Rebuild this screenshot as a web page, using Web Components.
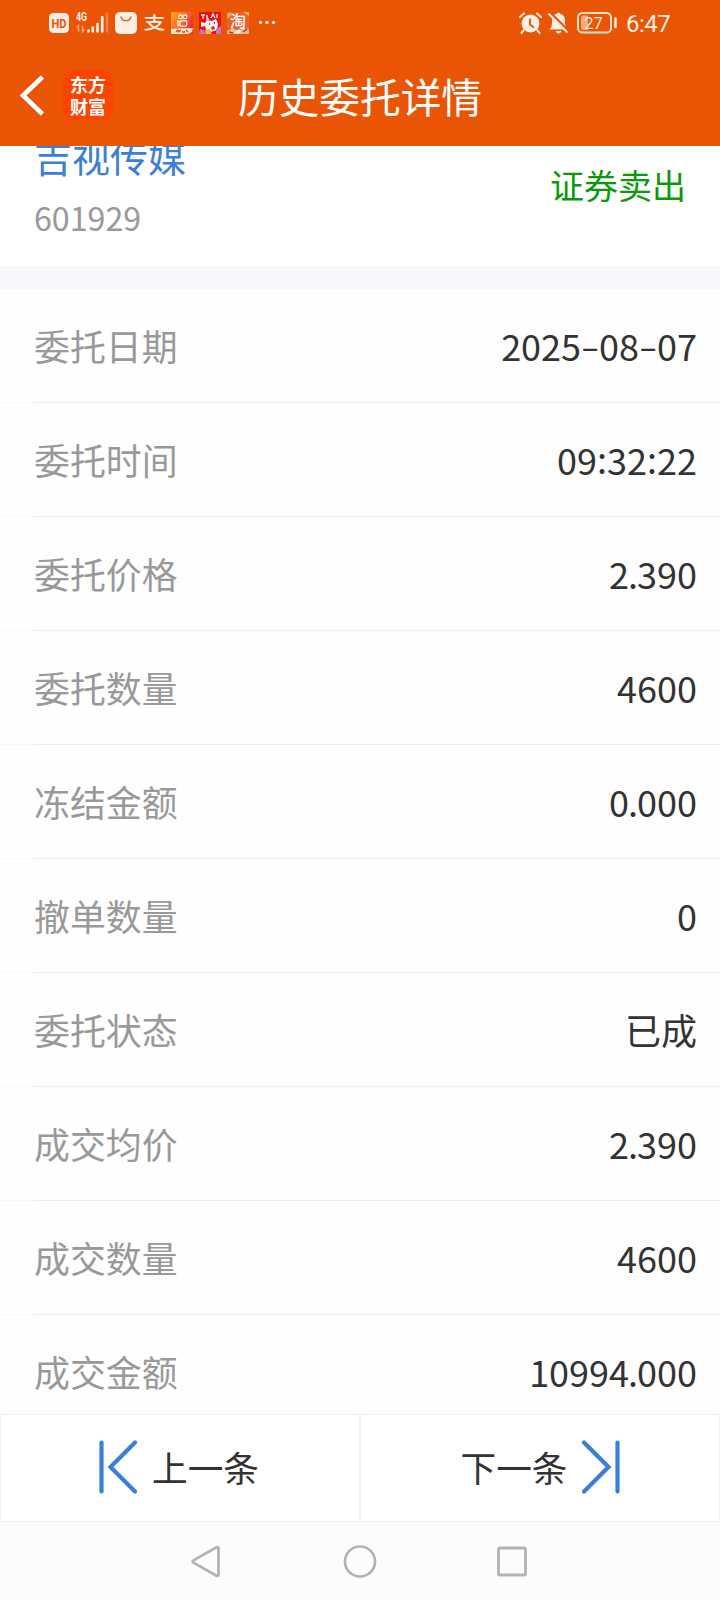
<!DOCTYPE html>
<html lang="zh-CN">
<head>
<meta charset="utf-8">
<title>历史委托详情</title>
<style>
html,body{margin:0;height:100%;background:#fff}
body{font-family:"Noto Sans CJK SC",sans-serif;color:#333;overflow:hidden}
</style>
</head>
<body>
<order-page></order-page>
<script>
function define(name, html) {
  const t = document.createElement('template');
  t.innerHTML = html;
  customElements.define(name, class extends HTMLElement {
    constructor() {
      super();
      this.attachShadow({mode: 'open'}).appendChild(t.content.cloneNode(true));
    }
  });
}

define('status-bar', `
<style>
:host{display:flex;height:46px;box-sizing:border-box;padding:12px 50px 0 49px;align-items:flex-start;color:#ffeee2}
svg{display:block;flex:none;overflow:visible}
.l,.r{display:flex;align-items:flex-start}
.r{margin-left:auto}
text{font-family:"Noto Sans CJK SC",sans-serif}
.time{font:24px/24px Roboto,sans-serif;letter-spacing:-.5px;width:44px;white-space:nowrap;margin-left:8px}
</style>
<div class="l">
 <svg width="20" height="22"><rect y="1" width="20" height="20" rx="4.5" fill="#ffeee2"/><text x="10" y="16" text-anchor="middle" textLength="15" lengthAdjust="spacingAndGlyphs" font-size="13.500" font-weight="700" style="font-family:Roboto,sans-serif" fill="#e95504">HD</text></svg>
 <svg width="33" height="22" style="margin-left:6px"><text x="1" y="8.5" textLength="11" lengthAdjust="spacingAndGlyphs" font-size="12" font-weight="700" style="font-family:Roboto,sans-serif" fill="#ffeee2">4G</text>
 <path d="M3.5 19.5v-6l-2 2M7.500 13.500v6l2-2" stroke="#f5a577" stroke-width="1.600" fill="none"/>
 <path d="M13.500 19.500v-1M17.800 19.500v-4M22.500 19.500v-7.500M27.200 19.500V5" stroke="#ffeee2" stroke-width="2.700" stroke-linecap="round"/><path d="M32 19.500V1.500" stroke="#f08448" stroke-width="2.500" stroke-linecap="round"/></svg>
 <svg width="22" height="22" style="margin-left:7px"><rect width="22" height="22" rx="5" fill="#ffeee2"/><path d="M6 5c1.500 5 8.500 5 10 0" fill="none" stroke="#d96a2c" stroke-width="1.500" stroke-linecap="round"/></svg>
 <svg width="21" height="22" style="margin-left:7px"><text x="-.5" y="17" textLength="22" lengthAdjust="spacingAndGlyphs" font-size="17.500" font-weight="500" fill="#ffeee2">支</text></svg>
 <svg width="22" height="22" style="margin-left:6px"><defs><linearGradient id="k" x1="0" y1="0" x2="1" y2=".6"><stop stop-color="#ffa51d"/><stop offset=".55" stop-color="#f96a29"/><stop offset="1" stop-color="#f5243c"/></linearGradient></defs><rect width="22" height="22" fill="url(#k)"/><g fill="none" stroke="#fff3dc" stroke-width="1.300"><rect x="7.700" y="3" width="3.500" height="3.600" rx="1.200"/><rect x="12.200" y="3" width="3.500" height="3.600" rx="1.200"/><rect x="9" y="8.800" width="6.700" height="5.400" rx="1"/><path d="M9 10l-2-1v5l2-1"/></g><path d="M0 17q11-1 22-1l-1 4-4 2H0z" fill="#ffe9c0"/><path d="M5 20l2-2 1 2 2-2m1 2h3m1-2l2 2" stroke="#d83b29" stroke-width="1.300" fill="none"/></svg>
 <svg width="22" height="22" style="margin-left:6px"><rect width="22" height="22" fill="#ef0d13"/><path d="M2 3h4M4 3v4M8 3v4h2M12 6l2-4 2 4M18 2v4" stroke="#fff" stroke-width="1.300" fill="none"/><path d="M2 10l4 1 2-3 5 1 4-2 2 5-1 6-6 2-5-2-1-4-4 1z" fill="#fff4f3"/><path d="M1 17l4 1 2 4H0zM17 17l5-3v8h-5z" fill="#bd75ca"/><path d="M6 18l4-1 3 5H7z" fill="#ffb43d"/><path d="M10 12h1M15 11h1" stroke="#321515" stroke-width="1.500"/><path d="M12 15l3-1 1 3-3 1z" fill="#e51e22"/></svg>
 <svg width="22" height="22" style="margin-left:6px"><rect width="22" height="22" fill="#ed6128"/><path d="M0 2l3-2 2 3-5 4zM16 0h6v4z" fill="#e8ad52"/><path d="M0 19l6-3 5 3 6-3 5 1v5H0z" fill="#e9bb91"/><path d="M9 19l3-2 2 2-2 3-5-1z" fill="#fff4ea"/><path d="M2 20l4 1M16 20l4-3" stroke="#bf3328" stroke-width="1.500"/><text x="3" y="15" font-size="16" font-weight="500" fill="#fff">淘</text></svg>
 <svg width="20" height="22" style="margin-left:9px"><g fill="#ffeee2"><circle cx="2.500" cy="10.500" r="1.700"/><circle cx="9" cy="10.500" r="1.700"/><circle cx="15.500" cy="10.500" r="1.700"/></g></svg>
</div>
<div class="r">
 <svg width="23" height="22"><circle cx="11.500" cy="11.500" r="9" fill="#ffeee2"/><path d="M1 5l4-3.500M22 5l-4-3.500M4.500 18.500L2.500 21M18.500 18.500l2 2.500" stroke="#ffeee2" stroke-width="2.200" stroke-linecap="round"/><path d="M11 6.500v6l4 3" fill="none" stroke="#e95504" stroke-width="1.900"/></svg>
 <svg width="21" height="22" style="margin-left:6px"><path d="M1.500 17.500C4 15 4 13 4 8c0-4 3-6 5-6.300C9 .3 12 .3 12 1.700c3 .6 5 3 5 6.300 0 5 0 7 2.500 9.500z" fill="#ffeee2"/><path d="M7.500 19h6q-1 2.500-3 2.500T7.500 19z" fill="#ffeee2"/><path d="M2 .500L21 19.500" stroke="#e95504" stroke-width="2.500"/><path d="M.500 1.500L19.500 20.500" stroke="#ffeee2" stroke-width="2"/></svg>
 <svg width="41" height="22" style="margin-left:8px"><rect x="1" y="1" width="33" height="19.500" rx="4.500" fill="none" stroke="#ffddc7" stroke-width="2"/><path d="M6 3.500h5v14.500H6q-2 0-2-2.500V6Q4 3.500 6 3.500z" fill="#f9a877"/><path d="M38.500 6.500v8.500" stroke="#ffeee2" stroke-width="2.500" stroke-linecap="round"/><text x="16.500" y="16.500" text-anchor="middle" font-size="16.500" style="font-family:Roboto,sans-serif" fill="#fff0e4">27</text></svg>
 <div class="time">6:47</div>
</div>`);

define('title-bar', `
<style>
:host{display:grid;grid-template-columns:1fr auto 1fr;height:100px;color:#fff;align-items:start}
.left{display:flex;align-items:flex-start;padding:24px 0 0 19px}
svg{display:block;margin-top:4px}
.logo{width:50px;height:51px;margin-left:18px;border-radius:11px;background:#ff4400;box-sizing:border-box;padding-top:3px;text-align:center;font-weight:700;font-size:18px;line-height:22px}
h1{margin:0;padding-top:20px;font-size:40.700px;line-height:60px;font-weight:400;white-space:nowrap}
</style>
<div class="left"><svg width="26" height="43"><path d="M23.500 3L4 21.500 23.500 40" fill="none" stroke="#fff" stroke-width="4.600"/></svg><div class="logo">东方<br>财富</div></div>
<h1><slot></slot></h1><span></span>`);

define('stock-head', `
<style>
:host{display:flex;justify-content:space-between;height:120px;box-sizing:border-box;padding:0 34px;background:#fff;overflow:hidden}
.name{display:block;color:#3a80d9;font-size:38px;line-height:56px;margin-top:-18px;white-space:nowrap}
.code{display:block;color:#999;font-size:32.200px;line-height:48px;margin-top:9px}
.side{display:block;color:#0a9a0a;font-size:34px;line-height:50px;padding-top:14px}
</style>
<div><slot class="name" name="name"></slot><slot class="code" name="code"></slot></div>
<slot class="side" name="side"></slot>`);

define('detail-row', `
<style>
:host{display:flex;justify-content:space-between;height:114px;box-sizing:border-box;padding:29px 23px 0 34px;background:linear-gradient(#ebecee,#ebecee) 34px 113px/100% 1px no-repeat,linear-gradient(#f8f8f8,#f8f8f8) 0 113px/34px 1px no-repeat,#fefefe;line-height:54px;font-size:35.900px;flex:none}
.k{color:#999}
.v{color:#333;font-size:36px}
::slotted(i){display:inline-block;font-style:normal;line-height:1;width:18px;text-align:center;transform:scale(1.500,.9)}
::slotted(b){display:inline-block;font-weight:400;line-height:1;transform:translateY(-1px)}
::slotted(u){text-decoration:none;margin-left:-1px;margin-right:-1px}
</style>
<slot class="k" name="k"></slot><div class="v"><slot></slot></div>`);

define('pager-button', `
<style>
:host{display:flex;flex:1;box-sizing:border-box;height:108px;border:1px solid #f0f0f0;background:#fff;justify-content:center;font-size:35.700px;line-height:53px;padding-top:25px;white-space:nowrap}
:host([dir-next]){flex-direction:row-reverse}
svg{display:block;margin:0 15px 0 -2px}
:host([dir-next]) svg{transform:scaleX(-1);margin:0 0 0 14px}
</style>
<svg width="38" height="54"><path d="M2.500 2.500v49M36 2.500L11.500 27l24.500 24.500" fill="none" stroke="#3a80d9" stroke-width="4.200" stroke-linecap="round"/></svg><span><slot></slot></span>`);

define('nav-bar', `
<style>
:host{display:flex;height:78px;background:#fcfcfc;padding:0 191px 0 190px;justify-content:space-between}
svg{display:block;margin-top:20.500px}
.c{margin-left:4px}
</style>
<svg width="32" height="36"><path d="M28.500 5v27q-.500 1.500-2 .700L3.500 19.700q-1.800-1.200 0-2.400L26.500 4.300q1.500-.800 2 .700z" fill="none" stroke="#b2b2b2" stroke-width="2.700"/></svg>
<svg class="c" width="36" height="38"><circle cx="18" cy="18.500" r="15" fill="none" stroke="#b2b2b2" stroke-width="2.700"/></svg>
<svg width="36" height="38"><rect x="5.500" y="5" width="27" height="27" rx="1.500" fill="none" stroke="#b2b2b2" stroke-width="2.800"/></svg>`);

define('order-page', `
<style>
:host{display:flex;flex-direction:column;width:720px;height:1600px;overflow:hidden}
header{background:#e95504;height:146px;flex:none}
main{height:1268px;flex:none;overflow:hidden}
.band{height:23px;background:#f6f7fa}
footer{display:flex;flex:none}
</style>
<header><status-bar></status-bar><title-bar>历史委托详情</title-bar></header>
<main>
<stock-head><span slot="name">吉视传媒</span><span slot="code">601929</span><span slot="side">证券卖出</span></stock-head>
<div class="band"></div>
<detail-row><span slot="k">委托日期</span>2025<i>-</i>08<i>-</i>07</detail-row>
<detail-row><span slot="k">委托时间</span>09<b>:</b>32<b>:</b>22</detail-row>
<detail-row><span slot="k">委托价格</span>2<u>.</u>390</detail-row>
<detail-row><span slot="k">委托数量</span>4600</detail-row>
<detail-row><span slot="k">冻结金额</span>0<u>.</u>000</detail-row>
<detail-row><span slot="k">撤单数量</span>0</detail-row>
<detail-row><span slot="k">委托状态</span>已成</detail-row>
<detail-row><span slot="k">成交均价</span>2<u>.</u>390</detail-row>
<detail-row><span slot="k">成交数量</span>4600</detail-row>
<detail-row><span slot="k">成交金额</span>10994<u>.</u>000</detail-row>
</main>
<footer><pager-button>上一条</pager-button><pager-button dir-next>下一条</pager-button></footer>
<nav-bar></nav-bar>`);
</script>
</body>
</html>
